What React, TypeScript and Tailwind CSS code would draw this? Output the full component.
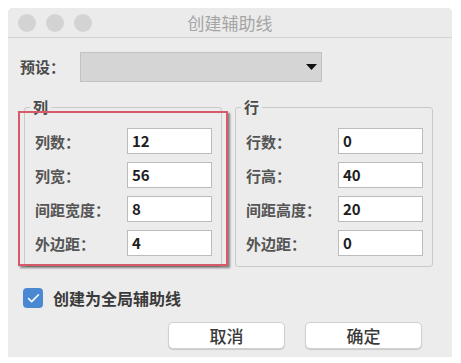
import { Check } from "lucide-react";

const FONT = { fontFamily: '"Noto Sans CJK SC", "Noto Sans", sans-serif' };

type Row = { label: string; value: string };

const COLS: Row[] = [
  { label: "列数：", value: "12" },
  { label: "列宽：", value: "56" },
  { label: "间距宽度：", value: "8" },
  { label: "外边距：", value: "4" },
];

const ROWS: Row[] = [
  { label: "行数：", value: "0" },
  { label: "行高：", value: "40" },
  { label: "间距高度：", value: "20" },
  { label: "外边距：", value: "0" },
];

function Group({ title, rows, marked }: { title: string; rows: Row[]; marked?: boolean }) {
  return (
    <fieldset className="relative w-[198px] border border-[#c9c9c9] rounded-[3px] pl-[10px] pr-[9px] pt-[11px] pb-[10px]">
      <legend className="ml-[-5px] px-[3px] text-[15px] leading-[20px] font-semibold text-[#4a4a4a]">
        {title}
      </legend>
      <div className="flex flex-col gap-[8px]">
        {rows.map((r) => (
          <div key={r.label} className="flex items-center justify-between">
            <span className="text-[15px] font-semibold text-[#555] leading-none">{r.label}</span>
            <div className="w-[85px] h-[26px] bg-white border border-[#bcbcbc] flex items-center pl-[4px] text-[15px] font-semibold text-[#1e1e1e]">
              {r.value}
            </div>
          </div>
        ))}
      </div>
      {marked && (
        <div className="absolute left-[-7px] top-[-6px] right-[-7px] bottom-[0px] border-2 border-[#d65a69] shadow-[2px_2px_2px_rgba(0,0,0,0.45)] pointer-events-none" />
      )}
    </fieldset>
  );
}

export default function App() {
  return (
    <div className="w-[461px] h-[363px] bg-white pt-[8px] pl-[8px]" style={FONT}>
      <div className="w-[444px] h-[349px] bg-[#ececec] rounded-t-[5px] flex flex-col">
        {/* title bar */}
        <div className="relative h-[30px] flex items-center border-b border-[#d4d4d4] bg-[#ebebeb] rounded-t-[5px]">
          <div className="flex gap-[10px] pl-[10px]">
            <span className="w-[18px] h-[18px] rounded-full bg-[#d3d3d3]" />
            <span className="w-[18px] h-[18px] rounded-full bg-[#d3d3d3]" />
            <span className="w-[18px] h-[18px] rounded-full bg-[#d3d3d3]" />
          </div>
          <div className="absolute inset-0 flex items-center justify-center text-[17px] text-[#a5a5a5]">
            创建辅助线
          </div>
        </div>

        {/* preset */}
        <div className="flex items-center mt-[14px] pl-[12px]">
          <span className="w-[60px] text-[15px] font-semibold text-[#4a4a4a]">预设：</span>
          <div className="w-[242px] h-[30px] bg-[#d5d5d5] border border-[#c2c2c2] flex items-center justify-end pr-[4px]">
            <svg width="11" height="6" viewBox="0 0 11 6">
              <path d="M0 0 L11 0 L5.5 6 Z" fill="#111" />
            </svg>
          </div>
        </div>

        {/* groups */}
        <div className="flex gap-[13px] mt-[15px] pl-[16px]">
          <Group title="列" rows={COLS} marked />
          <Group title="行" rows={ROWS} />
        </div>

        {/* checkbox */}
        <div className="flex items-center mt-[19px] pl-[15px] gap-[10px]">
          <div className="w-[20px] h-[20px] rounded-[4px] bg-[#4a89d2] flex items-center justify-center">
            <Check size={15} color="white" strokeWidth={2.5} />
          </div>
          <span className="text-[16px] font-semibold text-[#3a3a3a]">创建为全局辅助线</span>
        </div>

        {/* buttons */}
        <div className="flex justify-end gap-[20px] mt-[12px] pr-[30px]">
          <button className="w-[117px] h-[27px] bg-white rounded-[5px] border border-[#d0d0d0] shadow-[0_1px_1px_rgba(0,0,0,0.15)] text-[17px] font-medium text-[#3a3a3a] flex items-center justify-center">
            取消
          </button>
          <button className="w-[117px] h-[27px] bg-white rounded-[5px] border border-[#d0d0d0] shadow-[0_1px_1px_rgba(0,0,0,0.15)] text-[17px] font-medium text-[#3a3a3a] flex items-center justify-center">
            确定
          </button>
        </div>
      </div>
    </div>
  );
}
